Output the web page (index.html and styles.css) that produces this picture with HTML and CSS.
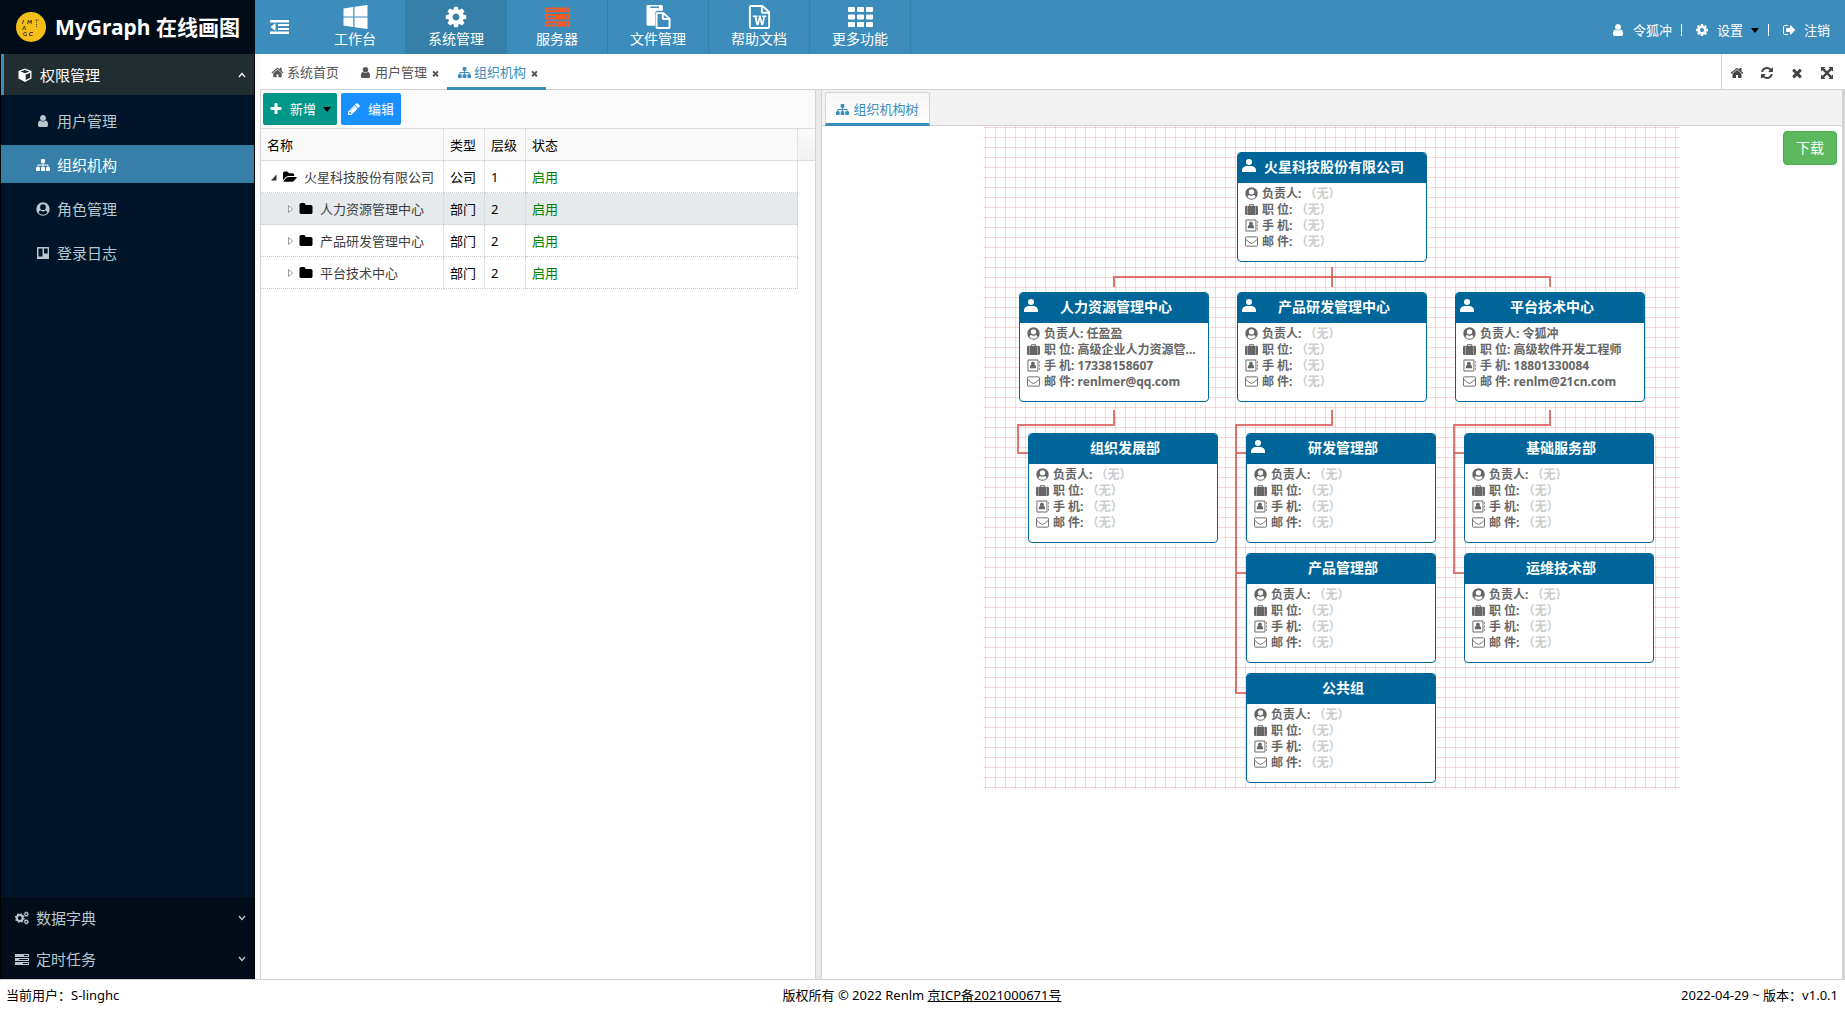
FILE: index.html
```html
<!DOCTYPE html>
<html lang="zh-CN">
<head>
<meta charset="utf-8">
<meta name="viewport" content="width=device-width, initial-scale=1">
<title>MyGraph 在线画图</title>
<link rel="stylesheet" href="styles.css">
</head>
<body>
<svg class="sprite" aria-hidden="true">
  <symbol id="i-user" viewBox="0 0 1792 1792"><path d="M1536 1399q0 109-62.500 187t-150.500 78h-854q-88 0-150.500-78t-62.500-187q0-85 8.500-160.500t31.500-152 58.500-131 94-89 134.500-34.500q131 128 313 128t313-128q76 0 134.500 34.500t94 89 58.500 131 31.500 152 8.500 160.500zm-256-887q0 159-112.500 271.500t-271.500 112.500-271.500-112.500-112.500-271.500 112.500-271.500 271.500-112.500 271.500 112.500 112.500 271.500z"/></symbol>
  <symbol id="i-sitemap" viewBox="0 0 1792 1792"><path d="M1792 1248v320q0 40-28 68t-68 28h-320q-40 0-68-28t-28-68v-320q0-40 28-68t68-28h96v-192h-512v192h96q40 0 68 28t28 68v320q0 40-28 68t-68 28h-320q-40 0-68-28t-28-68v-320q0-40 28-68t68-28h96v-192h-512v192h96q40 0 68 28t28 68v320q0 40-28 68t-68 28h-320q-40 0-68-28t-28-68v-320q0-40 28-68t68-28h96v-192q0-52 38-90t90-38h512v-192h-96q-40 0-68-28t-28-68v-320q0-40 28-68t68-28h320q40 0 68 28t28 68v320q0 40-28 68t-68 28h-96v192h512q52 0 90 38t38 90v192h96q40 0 68 28t28 68z"/></symbol>
  <symbol id="i-home" viewBox="0 0 1792 1792"><path d="M1472 992v480q0 26-19 45t-45 19h-384v-384h-256v384h-384q-26 0-45-19t-19-45v-480q0-1 .5-3t.5-3l575-474 575 474q1 2 1 6zm223-69l-62 74q-8 9-21 11h-3q-13 0-21-7l-692-577-692 577q-12 8-24 7-13-2-21-11l-62-74q-8-10-7-23.500t11-21.500l719-599q32-26 76-26t76 26l244 204v-195q0-14 9-23t23-9h192q14 0 23 9t9 23v408l219 182q10 8 11 21.500t-7 23.500z"/></symbol>
  <symbol id="i-cog" viewBox="0 0 1792 1792"><path d="M1152 896q0-106-75-181t-181-75-181 75-75 181 75 181 181 75 181-75 75-181zm512-109v222q0 12-8 23t-20 13l-185 28q-19 54-39 91 35 50 107 138 10 12 10 25t-9 23q-27 37-99 108t-94 71q-12 0-26-9l-138-108q-44 23-91 38-16 136-29 186-7 28-36 28h-222q-14 0-24.500-8.500t-11.500-21.500l-28-184q-49-16-90-37l-141 107q-10 9-25 9-14 0-25-11-126-114-165-168-7-10-7-23 0-12 8-23 15-21 51-66.500t54-70.500q-27-50-41-99l-183-27q-13-2-21-12.500t-8-23.500v-222q0-12 8-23t19-13l186-28q14-46 39-92-40-57-107-138-10-12-10-24 0-10 9-23 26-36 98.500-107.500t94.500-71.500q13 0 26 10l138 107q44-23 91-38 16-136 29-186 7-28 36-28h222q14 0 24.500 8.500t11.500 21.500l28 184q49 16 90 37l142-107q9-9 24-9 13 0 25 10 129 119 165 170 7 8 7 22 0 12-8 23-15 21-51 66.500t-54 70.500q26 50 41 98l183 28q13 2 21 12.500t8 23.500z"/></symbol>
  <symbol id="i-times" viewBox="0 0 1792 1792"><path d="M1490 1322q0 40-28 68l-136 136q-28 28-68 28t-68-28l-294-294-294 294q-28 28-68 28t-68-28l-136-136q-28-28-28-68t28-68l294-294-294-294q-28-28-28-68t28-68l136-136q28-28 68-28t68 28l294 294 294-294q28-28 68-28t68 28l136 136q28 28 28 68t-28 68l-294 294 294 294q28 28 28 68z"/></symbol>
  <symbol id="i-plus" viewBox="0 0 1792 1792"><path d="M1600 736v192q0 40-28 68t-68 28h-416v416q0 40-28 68t-68 28h-192q-40 0-68-28t-28-68v-416h-416q-40 0-68-28t-28-68v-192q0-40 28-68t68-28h416v-416q0-40 28-68t68-28h192q40 0 68 28t28 68v416h416q40 0 68 28t28 68z"/></symbol>
  <symbol id="i-refresh" viewBox="0 0 1792 1792"><path d="M1639 1056q0 5-1 7-64 268-268 434.500t-478 166.500q-146 0-282.500-55t-243.500-157l-129 129q-19 19-45 19t-45-19-19-45v-448q0-26 19-45t45-19h448q26 0 45 19t19 45-19 45l-137 137q71 66 161 102t187 36q134 0 250-65t186-179q11-17 53-117 8-23 30-23h192q13 0 22.500 9.500t9.500 22.500zm25-800v448q0 26-19 45t-45 19h-448q-26 0-45-19t-19-45 19-45l138-138q-148-137-349-137-134 0-250 65t-186 179q-11 17-53 117-8 23-30 23h-199q-13 0-22.500-9.500t-9.500-22.500v-7q65-268 270-434.500t480-166.500q146 0 284 55.500t245 156.500l130-129q19-19 45-19t45 19 19 45z"/></symbol>
  <symbol id="i-signout" viewBox="0 0 1664 1792"><path d="M704 1440q0 4 1 20t.5 26.500-3 23.500-10 19.500-20.500 6.500h-320q-119 0-203.500-84.500t-84.500-203.500v-704q0-119 84.500-203.500t203.500-84.500h320q13 0 22.500 9.500t9.500 22.500q0 4 1 20t.5 26.500-3 23.500-10 19.500-20.500 6.500h-320q-66 0-113 47t-47 113v704q0 66 47 113t113 47h312l11.500 1 11.500 3 8 5.500 7 9 2 13.500zm928-544q0 26-19 45l-544 544q-19 19-45 19t-45-19-19-45v-288h-448q-26 0-45-19t-19-45v-384q0-26 19-45t45-19h448v-288q0-26 19-45t45-19 45 19l544 544q19 19 19 45z"/></symbol>
  <symbol id="i-pencil" viewBox="0 0 1792 1792"><path d="M491 1536l91-91-235-235-91 91v107h128v128h107zm523-928q0-22-22-22-10 0-17 7l-542 542q-7 7-7 17 0 22 22 22 10 0 17-7l542-542q7-7 7-17zm-54-192l416 416-832 832h-416v-416zm683 96q0 53-37 90l-166 166-416-416 166-165q36-38 90-38 53 0 91 38l235 234q37 39 37 91z"/></symbol>
  <symbol id="i-folder" viewBox="0 0 1792 1792"><path d="M1728 608v704q0 92-66 158t-158 66h-1216q-92 0-158-66t-66-158v-960q0-92 66-158t158-66h320q92 0 158 66t66 158v32h672q92 0 158 66t66 158z"/></symbol>
  <symbol id="i-folder-open" viewBox="0 0 1920 1792"><path d="M1879 952q0 31-31 66l-336 396q-43 51-120.500 86.500t-143.500 35.500h-1088q-34 0-60.500-13t-26.500-43q0-31 31-66l336-396q43-51 120.500-86.500t143.500-35.500h1088q34 0 60.500 13t26.500 43zm-343-344v160h-832q-94 0-197 47.500t-164 119.500l-337 396-5 6q0-4-.5-12.500t-.5-12.500v-960q0-92 66-158t158-66h320q92 0 158 66t66 158v32h544q92 0 158 66t66 158z"/></symbol>
  <symbol id="i-windows" viewBox="0 0 24 24"><path d="M0 3.400l9.800-1.400v9.500H0zM11 1.800L24 0v11.500H11zM0 12.600h9.800V22L0 20.600zM11 12.600h13V24l-13-1.800z"/></symbol>
  <symbol id="i-server" viewBox="0 0 26 20"><path fill-rule="evenodd" d="M0 0h26v5H0zM2 2v1h12V2zM21 1.500v2h2v-2zM0 7h26v5.500H0zM2 9v1.500h9V9zM21 8.700v2h2v-2zM0 14.500h26V20H0zM2 16.500V18h12v-1.500zM21 16.200v2h2v-2z"/></symbol>
  <symbol id="i-paste" viewBox="0 0 25 25"><path fill-rule="evenodd" d="M1.500 0h14Q17 0 17 1.500V6h-5q-3 0-3 3v12.500H1.500Q0 21.500 0 20V1.500Q0 0 1.500 0zM4 1.500V3h9V1.500zM11 7.500h7l7 6.500v9.500q0 1.500-1.500 1.500H11q-1.500 0-1.500-1.500V9q0-1.500 1.500-1.500zm.5 2V23H23v-7.500h-5.500q-1.500 0-1.500-1.500V9.500zm6.500.7v3.400h3.700z"/></symbol>
  <symbol id="i-word" viewBox="0 0 22 25"><path fill-rule="evenodd" d="M2 0h12.500L22 7v16q0 2-2 2H2q-2 0-2-2V2q0-2 2-2zm0 2v21h18V9h-6q-1.500 0-1.500-1.500V2zm12.500.7V7h4.600z"/><path d="M4 11h5v1.500H7.900L9 18l1.600-7h1.700l1.500 7 1.200-5.500h-1.200V11H18v1.500h-1.200L14.900 21h-2.200l-1.300-6-1.300 6H7.900L5.800 12.500H4z"/></symbol>
  <symbol id="i-th" viewBox="0 0 25 20"><path d="M1 0h5q1 0 1 1v3q0 1-1 1H1Q0 5 0 4V1q0-1 1-1zM10 0h5q1 0 1 1v3q0 1-1 1h-5Q9 5 9 4V1q0-1 1-1zM19 0h5q1 0 1 1v3q0 1-1 1h-5q-1 0-1-1V1q0-1 1-1zM1 7.500h5q1 0 1 1v3q0 1-1 1H1q-1 0-1-1v-3q0-1 1-1zM10 7.500h5q1 0 1 1v3q0 1-1 1h-5q-1 0-1-1v-3q0-1 1-1zM19 7.500h5q1 0 1 1v3q0 1-1 1h-5q-1 0-1-1v-3q0-1 1-1zM1 15h5q1 0 1 1v3q0 1-1 1H1q-1 0-1-1v-3q0-1 1-1zM10 15h5q1 0 1 1v3q0 1-1 1h-5q-1 0-1-1v-3q0-1 1-1zM19 15h5q1 0 1 1v3q0 1-1 1h-5q-1 0-1-1v-3q0-1 1-1z"/></symbol>
  <symbol id="i-outdent" viewBox="0 0 19 14"><path d="M0 0h19v2.500H0zM8 4h11v2H8zM8 8h11v2H8zM0 11.500h19V14H0zM5.500 3v8L.5 7z"/></symbol>
  <symbol id="i-expand" viewBox="0 0 14 14"><path d="M1 1h4.500L4.200 2.500 7 5.300l2.800-2.800L8.500 1H13v4.500l-1.500-1.300L8.700 7l2.800 2.800L13 8.500V13H8.500l1.300-1.500L7 8.700l-2.800 2.800L5.500 13H1V8.500l1.500 1.300L5.300 7 2.500 4.200 1 5.500z"/></symbol>
  <symbol id="i-cube" viewBox="0 0 14 14"><path fill-rule="evenodd" d="M7 .5l6.500 2.600v7.400L7 14 .5 10.500V3.100zM7 1.900L2.500 3.600 7 5.300l4.500-1.700zM7.700 6.600v5.500l4.500-2.400V4.900z"/></symbol>
  <symbol id="i-circle-user" viewBox="0 0 14 14"><path fill-rule="evenodd" d="M7 .3a6.700 6.700 0 1 1 0 13.400A6.700 6.700 0 0 1 7 .3zM7 2.300a2.900 2.900 0 1 0 0 5.800 2.900 2.900 0 0 0 0-5.800zM4.600 8.500Q3 8.700 2.600 10.700a5.700 5.700 0 0 0 8.800 0Q11 8.700 9.400 8.500 7 10.300 4.600 8.500z"/></symbol>
  <symbol id="i-trello" viewBox="0 0 14 14"><path fill-rule="evenodd" d="M1.500 1h11q.5 0 .5.500v11q0 .5-.5.500h-11q-.5 0-.5-.500v-11q0-.5.5-.5zM2.500 2.500v8h4v-8zM8 2.500v5h3.700v-5z"/></symbol>
  <symbol id="i-suitcase" viewBox="0 0 14 14"><path fill-rule="evenodd" d="M4.500 3V1.700Q4.500 1 5.200 1h3.600q.7 0 .7.700V3h1.700v10H2.800V3zm1-1v1h3V2zM2.400 3v10h-.9Q0 13 0 11.500v-7Q0 3 1.500 3zM11.600 3h.9Q14 3 14 4.500v7q0 1.500-1.500 1.500h-.9z"/></symbol>
  <symbol id="i-book" viewBox="0 0 14 14"><path fill-rule="evenodd" d="M1.500.5h9.800q1 0 1 1v11q0 1-1 1H1.500q-1 0-1-1v-11q0-1 1-1zm0 1v11h9.800v-11zM13 2.500h.8v2H13zM13 6h.8v2H13zM13 9.500h.8v2H13zM6.400 3a2 2 0 0 1 1.600 3.300q1.800.2 1.800 2.500V10H3V8.800q0-2.300 1.800-2.500A2 2 0 0 1 6.400 3z"/></symbol>
  <symbol id="i-mail" viewBox="0 0 14 14"><path fill="none" stroke="currentColor" d="M1.500 2h11q1 0 1 1v8q0 1-1 1h-11q-1 0-1-1V3q0-1 1-1zM.5 4.500Q4 7.500 5.500 8.500q1.500 1 3 0Q10 7.500 13.500 4.500"/></symbol>
  <symbol id="i-leader" viewBox="0 0 14 13"><circle cx="7" cy="3" r="3"/><path d="M0 13v-1.500Q0 7.500 4.500 7h5q4.500.5 4.500 4.500V13z"/></symbol>
  <symbol id="i-cogs" viewBox="0 0 14 14"><g fill="none" stroke="currentColor"><circle cx="4.800" cy="7" r="2.900" stroke-width="2"/><circle cx="4.800" cy="7" r="4.200" stroke-width="1.300" stroke-dasharray="1.700 1.600"/><circle cx="11.300" cy="3.200" r="1.500" stroke-width="1.200"/><circle cx="11.300" cy="3.200" r="2.300" stroke-width=".8" stroke-dasharray="1 .8"/><circle cx="11.300" cy="10.800" r="1.500" stroke-width="1.200"/><circle cx="11.300" cy="10.800" r="2.300" stroke-width=".8" stroke-dasharray="1 .8"/></g></symbol>
  <symbol id="i-tasks" viewBox="0 0 14 12"><path fill-rule="evenodd" d="M0 1h14v3H0zM9 2v1h4V2zM0 5h14v3H0zM4 6v1h9V6zM0 9h14v3H0zM8 10v1h5v-1z"/></symbol>
  <symbol id="i-up" viewBox="0 0 8 6"><path d="M1 5l3-3.500L7 5" fill="none" stroke="currentColor" stroke-width="1.300"/></symbol>
  <symbol id="i-down" viewBox="0 0 8 6"><path d="M1 1l3 3.500L7 1" fill="none" stroke="currentColor" stroke-width="1.300"/></symbol>
</svg>

<header class="topbar">
  <div class="brand">
    <svg class="brand-mark" viewBox="0 0 30 30" aria-hidden="true"><circle cx="15" cy="15" r="15" fill="#f5bd18"/><g fill="none" stroke="#4a4023"><path d="M7.500 8l-1 4M11.500 12l1-4 1 3 2-3-.5 4M6.500 18l2-4 1 4M10.500 20.500q-3-1-3 1.500t3 1.500v-1.500M17 20.500h-3l-.5 3h3"/><path d="M20.500 8v7M19.500 8h3" stroke-dasharray="1 1"/></g></svg>
    <span>MyGraph 在线画图</span>
  </div>
  <button class="collapse" type="button" aria-label="折叠菜单"><svg><use href="#i-outdent"/></svg></button>
  <nav class="modules">
    <a href="#"><svg><use href="#i-windows"/></svg>工作台</a>
    <a href="#" class="current"><svg class="big"><use href="#i-cog"/></svg>系统管理</a>
    <a href="#"><svg class="hot"><use href="#i-server"/></svg>服务器</a>
    <a href="#"><svg><use href="#i-paste"/></svg>文件管理</a>
    <a href="#"><svg><use href="#i-word"/></svg>帮助文档</a>
    <a href="#"><svg><use href="#i-th"/></svg>更多功能</a>
  </nav>
  <div class="account">
    <a href="#"><svg><use href="#i-user"/></svg>令狐冲</a><i class="bar"></i>
    <button type="button"><svg><use href="#i-cog"/></svg>设置<b class="caret"></b></button><i class="bar"></i>
    <a href="#"><svg><use href="#i-signout"/></svg>注销</a>
  </div>
</header>

<div class="middle">
  <aside class="sidebar">
    <button class="group open" type="button"><svg><use href="#i-cube"/></svg><span>权限管理</span><svg class="arrow"><use href="#i-up"/></svg></button>
    <nav class="links">
      <a href="#"><svg><use href="#i-user"/></svg>用户管理</a>
      <a href="#" class="current"><svg><use href="#i-sitemap"/></svg>组织机构</a>
      <a href="#"><svg><use href="#i-circle-user"/></svg>角色管理</a>
      <a href="#"><svg><use href="#i-trello"/></svg>登录日志</a>
    </nav>
    <button class="group" type="button"><svg><use href="#i-cogs"/></svg><span>数据字典</span><svg class="arrow"><use href="#i-down"/></svg></button>
    <button class="group" type="button"><svg><use href="#i-tasks"/></svg><span>定时任务</span><svg class="arrow"><use href="#i-down"/></svg></button>
  </aside>

  <main class="work">
    <div class="tabs">
      <div class="tab"><a href="#"><svg><use href="#i-home"/></svg>系统首页</a></div>
      <div class="tab"><a href="#"><svg><use href="#i-user"/></svg>用户管理</a><button type="button" aria-label="关闭用户管理"><svg><use href="#i-times"/></svg></button></div>
      <div class="tab current"><a href="#"><svg><use href="#i-sitemap"/></svg>组织机构</a><button type="button" aria-label="关闭组织机构"><svg><use href="#i-times"/></svg></button></div>
      <div class="tools">
        <button type="button" aria-label="首页"><svg><use href="#i-home"/></svg></button>
        <button type="button" aria-label="刷新"><svg><use href="#i-refresh"/></svg></button>
        <button type="button" aria-label="关闭"><svg><use href="#i-times"/></svg></button>
        <button type="button" aria-label="全屏"><svg><use href="#i-expand"/></svg></button>
      </div>
    </div>

    <div class="split">
      <section class="list">
        <div class="toolbar">
          <button class="btn add" type="button"><svg><use href="#i-plus"/></svg>新增<b class="caret"></b></button>
          <button class="btn edit" type="button"><svg><use href="#i-pencil"/></svg>编辑</button>
        </div>
        <div class="grid-wrap">
        <table class="grid">
          <colgroup><col class="c-name"><col class="c-type"><col class="c-level"><col class="c-state"><col></colgroup>
          <thead><tr><th>名称</th><th>类型</th><th>层级</th><th>状态</th><td></td></tr></thead>
          <tbody>
            <tr><td><span class="node"><svg class="twist" viewBox="0 0 8 8"><path d="M1 7.500L6.500 1.500v6z" fill="#333"/></svg><svg class="folder"><use href="#i-folder-open"/></svg>火星科技股份有限公司</span></td><td>公司</td><td>1</td><td class="on">启用</td><td></td></tr>
            <tr class="picked"><td><span class="node sub"><svg class="twist" viewBox="0 0 8 8"><path d="M2.500.5v7l4-3.500z" fill="#fff" stroke="#999"/></svg><svg class="folder"><use href="#i-folder"/></svg>人力资源管理中心</span></td><td>部门</td><td>2</td><td class="on">启用</td><td></td></tr>
            <tr><td><span class="node sub"><svg class="twist" viewBox="0 0 8 8"><path d="M2.500.5v7l4-3.500z" fill="#fff" stroke="#999"/></svg><svg class="folder"><use href="#i-folder"/></svg>产品研发管理中心</span></td><td>部门</td><td>2</td><td class="on">启用</td><td></td></tr>
            <tr><td><span class="node sub"><svg class="twist" viewBox="0 0 8 8"><path d="M2.500.5v7l4-3.500z" fill="#fff" stroke="#999"/></svg><svg class="folder"><use href="#i-folder"/></svg>平台技术中心</span></td><td>部门</td><td>2</td><td class="on">启用</td><td></td></tr>
          </tbody>
        </table>
        </div>
      </section>

      <section class="tree">
        <div class="tree-tabs"><a href="#" class="tree-tab"><svg><use href="#i-sitemap"/></svg>组织机构树</a></div>
        <div class="tree-body">
          <button class="download" type="button">下载</button>
          <div class="chart">
            <article class="card">
              <h3><svg><use href="#i-leader"/></svg>火星科技股份有限公司</h3>
              <p><svg><use href="#i-circle-user"/></svg>负责人: <em>（无）</em></p>
              <p><svg><use href="#i-suitcase"/></svg>职 位: <em>（无）</em></p>
              <p><svg><use href="#i-book"/></svg>手 机: <em>（无）</em></p>
              <p><svg><use href="#i-mail"/></svg>邮 件: <em>（无）</em></p>
            </article>
            <div class="branches">
              <div class="branch">
                <article class="card">
                  <h3><svg><use href="#i-leader"/></svg>人力资源管理中心</h3>
                  <p><svg><use href="#i-circle-user"/></svg>负责人: 任盈盈</p>
                  <p><svg><use href="#i-suitcase"/></svg>职 位: 高级企业人力资源管...</p>
                  <p><svg><use href="#i-book"/></svg>手 机: 17338158607</p>
                  <p><svg><use href="#i-mail"/></svg>邮 件: renlmer@qq.com</p>
                </article>
                <ul>
                  <li><article class="card">
                    <h3>组织发展部</h3>
                    <p><svg><use href="#i-circle-user"/></svg>负责人: <em>（无）</em></p>
                    <p><svg><use href="#i-suitcase"/></svg>职 位: <em>（无）</em></p>
                    <p><svg><use href="#i-book"/></svg>手 机: <em>（无）</em></p>
                    <p><svg><use href="#i-mail"/></svg>邮 件: <em>（无）</em></p>
                  </article></li>
                </ul>
              </div>
              <div class="branch">
                <article class="card">
                  <h3><svg><use href="#i-leader"/></svg>产品研发管理中心</h3>
                  <p><svg><use href="#i-circle-user"/></svg>负责人: <em>（无）</em></p>
                  <p><svg><use href="#i-suitcase"/></svg>职 位: <em>（无）</em></p>
                  <p><svg><use href="#i-book"/></svg>手 机: <em>（无）</em></p>
                  <p><svg><use href="#i-mail"/></svg>邮 件: <em>（无）</em></p>
                </article>
                <ul>
                  <li><article class="card">
                    <h3><svg><use href="#i-leader"/></svg>研发管理部</h3>
                    <p><svg><use href="#i-circle-user"/></svg>负责人: <em>（无）</em></p>
                    <p><svg><use href="#i-suitcase"/></svg>职 位: <em>（无）</em></p>
                    <p><svg><use href="#i-book"/></svg>手 机: <em>（无）</em></p>
                    <p><svg><use href="#i-mail"/></svg>邮 件: <em>（无）</em></p>
                  </article></li>
                  <li><article class="card">
                    <h3>产品管理部</h3>
                    <p><svg><use href="#i-circle-user"/></svg>负责人: <em>（无）</em></p>
                    <p><svg><use href="#i-suitcase"/></svg>职 位: <em>（无）</em></p>
                    <p><svg><use href="#i-book"/></svg>手 机: <em>（无）</em></p>
                    <p><svg><use href="#i-mail"/></svg>邮 件: <em>（无）</em></p>
                  </article></li>
                  <li><article class="card">
                    <h3>公共组</h3>
                    <p><svg><use href="#i-circle-user"/></svg>负责人: <em>（无）</em></p>
                    <p><svg><use href="#i-suitcase"/></svg>职 位: <em>（无）</em></p>
                    <p><svg><use href="#i-book"/></svg>手 机: <em>（无）</em></p>
                    <p><svg><use href="#i-mail"/></svg>邮 件: <em>（无）</em></p>
                  </article></li>
                </ul>
              </div>
              <div class="branch">
                <article class="card">
                  <h3><svg><use href="#i-leader"/></svg>平台技术中心</h3>
                  <p><svg><use href="#i-circle-user"/></svg>负责人: 令狐冲</p>
                  <p><svg><use href="#i-suitcase"/></svg>职 位: 高级软件开发工程师</p>
                  <p><svg><use href="#i-book"/></svg>手 机: 18801330084</p>
                  <p><svg><use href="#i-mail"/></svg>邮 件: renlm@21cn.com</p>
                </article>
                <ul>
                  <li><article class="card">
                    <h3>基础服务部</h3>
                    <p><svg><use href="#i-circle-user"/></svg>负责人: <em>（无）</em></p>
                    <p><svg><use href="#i-suitcase"/></svg>职 位: <em>（无）</em></p>
                    <p><svg><use href="#i-book"/></svg>手 机: <em>（无）</em></p>
                    <p><svg><use href="#i-mail"/></svg>邮 件: <em>（无）</em></p>
                  </article></li>
                  <li><article class="card">
                    <h3>运维技术部</h3>
                    <p><svg><use href="#i-circle-user"/></svg>负责人: <em>（无）</em></p>
                    <p><svg><use href="#i-suitcase"/></svg>职 位: <em>（无）</em></p>
                    <p><svg><use href="#i-book"/></svg>手 机: <em>（无）</em></p>
                    <p><svg><use href="#i-mail"/></svg>邮 件: <em>（无）</em></p>
                  </article></li>
                </ul>
              </div>
            </div>
          </div>
        </div>
      </section>
    </div>
  </main>
</div>

<footer class="status">
  <span>当前用户：S-linghc</span>
  <span>版权所有 © 2022 Renlm <a href="#">京ICP备2021000671号</a></span>
  <span>2022-04-29 ~ 版本：v1.0.1</span>
</footer>
</body>
</html>
```
FILE: styles.css
```css
*, *::before, *::after { box-sizing: border-box; }

body {
  margin: 0;
  min-height: 100vh;
  display: flex;
  flex-direction: column;
  font: 13px/20px "Noto Sans", "Noto Sans CJK SC", sans-serif;
  color: #000;
  background: #fff;
}

a { color: inherit; text-decoration: none; }
button { font: inherit; color: inherit; background: none; border: 0; padding: 0; cursor: pointer; }
svg { width: 14px; height: 14px; fill: currentColor; flex: none; display: block; }
.sprite { position: absolute; width: 0; height: 0; }

.caret {
  border: 4px solid transparent;
  border-top: 5px solid #000;
  border-bottom: 0;
}

/* top bar */
.topbar { display: flex; height: 54px; background: #3c8dbc; color: #fff; }
.brand {
  width: 255px;
  display: flex;
  align-items: center;
  gap: 9px;
  padding-left: 16px;
  background: #000c17;
  font-size: 21px;
  line-height: 28px;
  font-weight: 700;
  white-space: nowrap;
}
.brand-mark { width: 30px; height: 30px; }
.collapse { width: 50px; display: flex; align-items: center; padding-left: 15px; }
.collapse svg { width: 19px; height: 14px; }
.modules { display: flex; }
.modules a {
  width: 101px;
  display: flex;
  flex-direction: column;
  align-items: center;
  padding-top: 5px;
  border-right: 1px solid #367fa9;
  font-size: 14px;
}
.modules svg { width: 25px; height: 24px; }
.modules .big { width: 24px; }
.modules .current { background: #367fa9; }
.modules .hot { color: #ff5722; }
.account { margin-left: auto; display: flex; align-items: center; padding: 6px 15px 0 0; }
.account a, .account button { display: flex; align-items: center; gap: 8px; }
.account .bar { width: 1px; height: 12px; margin: 0 13px 0 9px; background: #fff; }

/* sidebar */
.middle { flex: 1; display: flex; min-height: 0; }
.sidebar {
  width: 255px;
  display: flex;
  flex-direction: column;
  background: #001529;
  border: solid #000;
  border-width: 0 1px;
  color: #b8c7ce;
  font-size: 15px;
}
.group {
  height: 41px;
  display: flex;
  align-items: center;
  gap: 7px;
  padding: 0 8px 0 14px;
  background: #000c17;
}
.group.open { gap: 8px; border-left: 3px solid #3c8dbc; background: #222d32; color: #fff; }
.group .arrow { width: 8px; height: 6px; margin-left: auto; }
.links { flex: 1; display: flex; flex-direction: column; gap: 6px; padding-top: 6px; }
.links a { height: 38px; display: flex; align-items: center; gap: 7px; padding: 2px 0 0 35px; }
.links .current { background: #367fa9; color: #fff; }

/* workspace */
.work { flex: 1; min-width: 0; display: flex; flex-direction: column; padding-left: 5px; background: #fafafa; }
.tabs { display: flex; height: 36px; background: #fff; border-bottom: 1px solid #d3d3d3; color: #555; }
.tab { display: flex; align-items: center; gap: 4px; height: 36px; padding: 0 7px 0 11px; }
.tab a { display: flex; align-items: center; gap: 3px; }
.tab svg { width: 13px; height: 13px; }
.tab:first-child { padding-right: 9px; }
.tab button svg { width: 9px; height: 9px; margin-top: 3px; }
.tab.current { padding-top: 3px; border-bottom: 3px solid #3c8dbc; }
.tab.current a { color: #3c8dbc; }
.tools { display: flex; margin-left: auto; padding-right: 3px; border-left: 1px solid #d3d3d3; color: #444; }
.tools button { width: 30px; display: grid; place-items: center; padding-top: 2px; }

.split { flex: 1; display: flex; min-height: 0; }
.list { flex: 0 0 556px; border: solid #d3d3d3; border-width: 0 1px; background: #fff; }
.toolbar { display: flex; gap: 4px; padding: 3px 2px; background: #fafafa; border-bottom: 1px solid #ddd; }
.btn { height: 32px; display: flex; align-items: center; gap: 7px; padding: 0 7px 0 6px; border-radius: 2px; color: #fff; }
.edit { background: #1890ff; }
.add { background: #009688; padding-right: 6px; }
.grid-wrap { overflow: hidden; }
.grid { width: 100%; table-layout: fixed; border-collapse: separate; border-spacing: 0; }
.c-name { width: 183px; }
.c-type, .c-level { width: 41px; }
.c-state { width: 272px; }
.grid th, .grid td {
  height: 32px;
  padding: 0 0 0 6px;
  border: dotted #ccc;
  border-width: 0 1px 1px 0;
  font-weight: 400;
  text-align: left;
  white-space: nowrap;
}
.grid thead th, .grid thead td { background: #f9f9f9; border-bottom: 1px solid #ddd; }
.grid thead td { background: linear-gradient(#fafafa, #f0f0f0); }
.grid td:last-child { border-right: 0; }
.grid tbody td:last-child { border: 0; }
.picked td:not(:last-child) { background: #e6eaed; }
.node { display: flex; align-items: center; gap: 7px; margin-left: 3px; color: #404040; }
.node.sub { margin-left: 19px; }
.twist { width: 8px; height: 8px; margin-right: -2px; }
.folder { color: #000; }
.grid .on { color: #008000; }

/* organisation tree */
.tree {
  flex: 1;
  min-width: 0;
  display: flex;
  flex-direction: column;
  border: solid #e9e9e9;
  border-width: 0 3px 0 5px;
  border-right-color: #d3d3d3;
  background: #fff;
}
.tree-tabs { height: 36px; padding: 2px 0 0 3px; background: #f2f2f2; border-bottom: 1px solid #d3d3d3; border-left: 1px solid #d3d3d3; }
.tree-tab {
  width: 105px;
  height: 34px;
  display: flex;
  align-items: center;
  justify-content: center;
  gap: 4px;
  padding-top: 2px;
  border: 1px solid #d3d3d3;
  border-bottom: 3px solid #3c8dbc;
  border-radius: 2px 2px 0 0;
  background: linear-gradient(#f6f6f6, #fff);
  color: #3c8dbc;
}
.tree-tab svg { width: 13px; height: 13px; }
.tree-body { flex: 1; position: relative; border-left: 1px solid #d3d3d3; }
.download {
  position: absolute;
  top: 5px;
  right: 5px;
  padding: 6px 12px;
  border: 1px solid #4cae4c;
  border-radius: 4px;
  background: #5cb85c;
  color: #fff;
  font-size: 14px;
}
.chart {
  width: max-content;
  margin: 0 auto;
  padding: 26px 21px 6px;
  background:
    linear-gradient(90deg, rgba(200, 0, 0, .15) 1px, transparent 1px) 1px 1px / 10px 10px,
    linear-gradient(rgba(200, 0, 0, .15) 1px, transparent 1px) 1px 1px / 10px 10px;
}
.card {
  width: 190px;
  height: 110px;
  margin: 0 auto;
  border: 1px solid #069;
  border-radius: 4px;
  background: #fff;
  color: #666;
  font-size: 12px;
  line-height: 16px;
  font-weight: 700;
  overflow: hidden;
}
.card h3 {
  position: relative;
  height: 30px;
  margin: 0 0 3px;
  padding: 0 16px 0 20px;
  background: #069;
  color: #fff;
  font-size: 14px;
  line-height: 28px;
  text-align: center;
  white-space: nowrap;
}
.card h3 svg { position: absolute; left: 4px; top: 6px; height: 13px; }
.card p { margin: 0; padding: 0 0 0 7px; white-space: nowrap; }
.card p svg { display: inline-block; width: 13px; height: 13px; margin-right: 4px; vertical-align: -2px; }
.card em { font-style: normal; color: #ccc; }

.branches { position: relative; display: grid; grid-template-columns: repeat(3, 218px); margin-top: 30px; }
.branches::before, .branches::after { content: ""; position: absolute; }
.branches::before { top: -25px; left: 50%; width: 2px; height: 20px; margin-left: -1px; background: rgba(217, 83, 79, .8); }
.branches::after {
  top: -16px;
  left: 108px;
  right: 108px;
  height: 11px;
  border: 2px solid rgba(217, 83, 79, .8);
  border-bottom: 0;
}
.branch ul { position: relative; margin: 31px 0 0; padding: 0 0 0 23px; list-style: none; display: grid; gap: 10px; }
.branch ul::before {
  content: "";
  position: absolute;
  top: -23px;
  left: 12px;
  width: 98px;
  height: 16px;
  border: solid rgba(217, 83, 79, .8);
  border-width: 0 2px 2px 0;
}
.branch li { position: relative; }
.branch li .card { margin: 0; }
.branch li::before {
  content: "";
  position: absolute;
  left: -11px;
  top: -100px;
  width: 11px;
  height: 121px;
  border: solid rgba(217, 83, 79, .8);
  border-width: 0 0 2px 2px;
}
.branch li:first-child::before { top: -7px; height: 28px; }

/* status line */
.status {
  height: 30px;
  display: grid;
  grid-template-columns: 1fr auto 1fr;
  align-items: center;
  padding: 1px 7px 0 6px;
  border-top: 1px solid #d3d3d3;
}
.status span:last-child { text-align: right; }
.status a { text-decoration: underline; }
```
